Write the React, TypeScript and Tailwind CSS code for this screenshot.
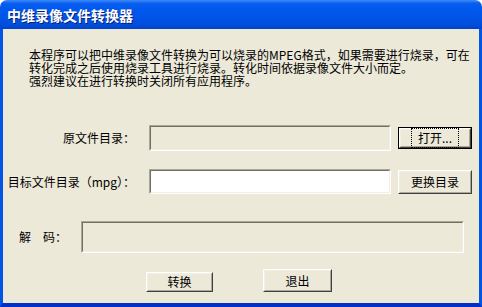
import React from "react"

const font = { fontFamily: '"Noto Sans CJK SC", "Liberation Sans", sans-serif' }

function Sunken({ className, white }: { className: string; white?: boolean }) {
  return (
    <div className={`border border-t-[#aca899] border-l-[#aca899] border-b-white border-r-white ${className}`}>
      <div
        className={`h-full w-full border border-t-[#716f64] border-l-[#716f64] border-b-[#f1efe2] border-r-[#f1efe2] ${
          white ? "bg-white" : "bg-[#ece9d8]"
        }`}
      />
    </div>
  )
}

function Button({
  label,
  className,
  focused,
}: {
  label: string
  className: string
  focused?: boolean
}) {
  return (
    <div className={`${focused ? "border border-black" : ""} ${className}`}>
      <div className="h-full w-full border border-t-white border-l-white border-b-[#404040] border-r-[#404040]">
        <div className="flex h-full w-full items-center justify-center border border-t-[#f1efe2] border-l-[#f1efe2] border-b-[#aca899] border-r-[#aca899] bg-[#ece9d8]">
          <span
            className={`px-[4px] text-[12px] leading-[14px] text-black ${
              focused ? "outline outline-1 outline-dotted outline-black outline-offset-[2px]" : ""
            }`}
          >
            {label}
          </span>
        </div>
      </div>
    </div>
  )
}

export default function App() {
  return (
    <div className="flex h-[307px] w-[482px] flex-col bg-white" style={font}>
      {/* Title bar */}
      <div className="flex h-[29px] items-center rounded-t-[7px] bg-[linear-gradient(to_bottom,#3d8cf7_0%,#0a5df0_12%,#0058ee_30%,#0055e8_60%,#004ddc_85%,#0042cb_100%)] pl-[7px]">
        <span className="text-[14px] font-bold leading-none text-white [text-shadow:1px_1px_0_#0a1e6e]">
          中维录像文件转换器
        </span>
      </div>

      {/* Body */}
      <div className="flex flex-1 flex-col border-x-[3px] border-b-[4px] border-x-[#0055e5] border-b-[#0030c8] bg-[#ece9d8] text-black">
        <div className="pl-[26px] pt-[19px] text-[12px] leading-[13px] whitespace-nowrap">
          <div>本程序可以把中维录像文件转换为可以烧录的MPEG格式，如果需要进行烧录，可在</div>
          <div>转化完成之后使用烧录工具进行烧录。转化时间依据录像文件大小而定。</div>
          <div>强烈建议在进行转换时关闭所有应用程序。</div>
        </div>

        <div className="mt-[38px] flex items-center">
          <div className="w-[132px] text-right text-[12px] leading-[12px]">原文件目录：</div>
          <Sunken className="ml-[14px] h-[26px] w-[242px]" />
          <Button label="打开..." className="ml-[7px] h-[22px] w-[74px]" focused />
        </div>

        <div className="mt-[18px] flex items-center">
          <div className="w-[132px] whitespace-nowrap text-right text-[12px] leading-[12px]">目标文件目录（mpg）：</div>
          <Sunken className="ml-[14px] h-[25px] w-[242px]" white />
          <Button label="更换目录" className="ml-[7px] h-[24px] w-[74px]" />
        </div>

        <div className="mt-[27px] flex items-center">
          <div className="ml-[16px] w-[62px] whitespace-pre text-[12px] leading-[12px]">解　码：</div>
          <Sunken className="h-[32px] w-[383px]" />
        </div>

        <div className="mt-[16px] flex items-end">
          <Button label="转换" className="ml-[143px] h-[20px] w-[67px]" />
          <Button label="退出" className="ml-[50px] h-[23px] w-[69px]" />
        </div>
      </div>
    </div>
  )
}
